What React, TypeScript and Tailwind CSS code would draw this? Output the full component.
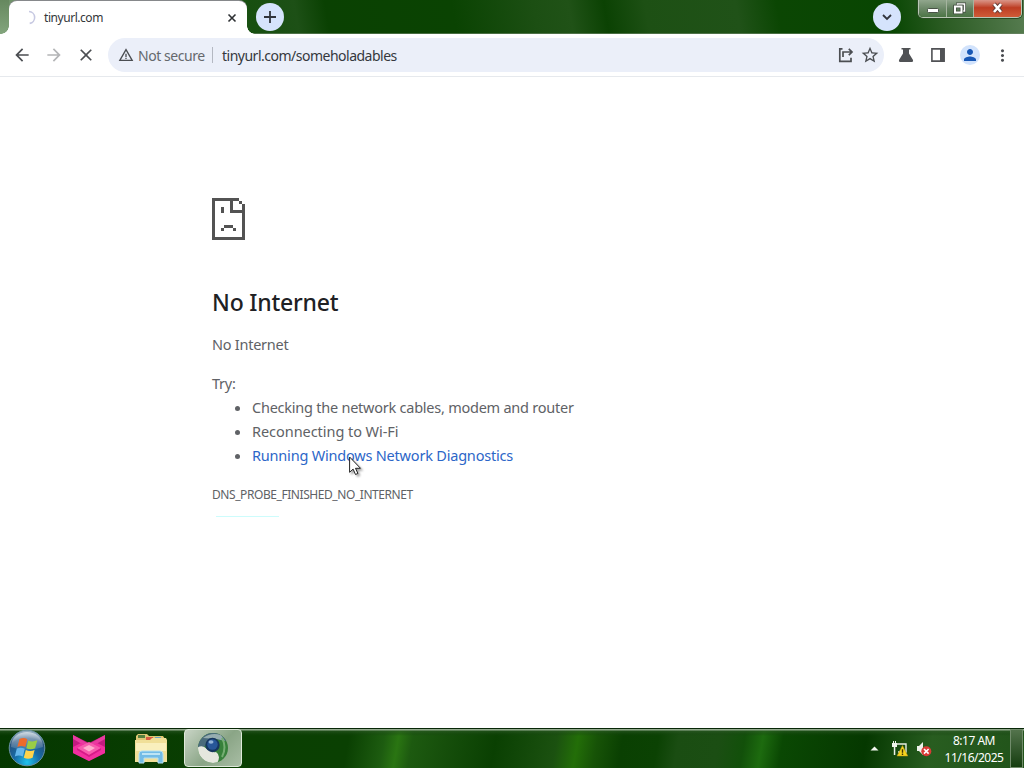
import type { ReactNode } from 'react';
import { MdArrowBack, MdArrowForward, MdClose, MdStarBorder, MdPerson, MdMoreVert, MdWarningAmber } from 'react-icons/md';

function RoundButton({ children }: { children: ReactNode }) {
  return (
    <button className="flex size-7 items-center justify-center rounded-full bg-[#d5e3fc] text-[#30343c]">
      {children}
    </button>
  );
}

/* Window buttons: minimize, restore, close */
function WindowControls() {
  return (
    <div className="flex h-[18px] w-[104px] overflow-hidden rounded-b-[5px] border border-t-0 border-[#b9c7b5] shadow-[0_0_0_1px_#294d23]">
      <button className="flex w-7 items-end justify-center border-r border-[#a5b49f] bg-gradient-to-b from-[#91a68d] via-[#6d8969] via-50% to-[#4c7545] pb-[4px]">
        <svg width="12" height="5" viewBox="0 0 12 5"><rect x=".5" y=".5" width="11" height="4" rx="1" fill="#fff" stroke="#485346" /></svg>
      </button>
      <button className="flex w-[27px] items-center justify-center border-r border-[#a5b49f] bg-gradient-to-b from-[#91a68d] via-[#627f5e] via-50% to-[#4c7545] pb-px pr-0.5">
        <svg width="13" height="13" viewBox="0 0 13 13" fill="none">
          <path d="M4.5 4V2h7v7h-2" stroke="#404b3f" strokeWidth="3" />
          <path d="M4.5 4V2h7v7h-2" stroke="#fff" strokeWidth="1.5" />
          <rect x="2" y="4.5" width="6.5" height="6" stroke="#404b3f" strokeWidth="3.5" />
          <rect x="2" y="4.5" width="6.5" height="6" stroke="#fff" strokeWidth="2" />
        </svg>
      </button>
      <button className="flex flex-1 items-center justify-center bg-gradient-to-b from-[#d99588] via-[#bd3d23] via-45% to-[#cf5b37] pb-0.5">
        <svg width="13" height="12" viewBox="0 0 13 12" fill="none">
          <path d="M3 2l7 8M10 2l-7 8" stroke="#643b36" strokeWidth="4.4" />
          <path d="M3 2l7 8M10 2l-7 8" stroke="#fff" strokeWidth="2.6" />
        </svg>
      </button>
    </div>
  );
}

function TabStrip() {
  return (
    <div className="flex h-[34px] items-start bg-[linear-gradient(0deg,rgba(110,135,105,0.6)_0,rgba(110,135,105,0.6)_1px,transparent_1px),linear-gradient(80deg,#75966f_0px,#4f7a48_140px,#174f10_250px,#1d5016_295px,#0a4102_325px,#0a4302_450px,#1c4f13_530px,#205217_565px,#0b4203_600px,#1d5014_640px,#205218_730px,#0b4603_770px,#084602_880px,#2a5b22_930px,#5c8056_1024px)]">
      <div className="flex h-[34px] w-[9px] items-end justify-end bg-gradient-to-b from-[#66885f] to-[#83a57d]">
        <div className="size-2 bg-[radial-gradient(circle_at_0_0,transparent_7.5px,#fff_8px)]" />
      </div>
      <div className="mt-px flex h-[33px] w-[238px] items-center rounded-t-lg bg-white pl-[14px] pr-[9px] shadow-[0_-1px_0_#86888b]">
        <svg width="15" height="15" viewBox="0 0 15 15" fill="none">
          <path d="M6 1.5A6 6 0 0 1 6.7 13.4" stroke="#c7c9e2" strokeWidth="1.6" />
        </svg>
        <span className="ml-1.5 flex-1 text-[12px] tracking-[-0.45px] text-[#34373a]">tinyurl.com</span>
        <svg width="12" height="12" viewBox="0 0 12 12"><path d="M2.5 2.5l7 7M9.5 2.5l-7 7" stroke="#2d3033" strokeWidth="1.6" /></svg>
      </div>
      <div className="flex h-[34px] w-2 items-end">
        <div className="size-2 bg-[radial-gradient(circle_at_100%_0,transparent_7.5px,#fff_8px)]" />
      </div>
      <div className="ml-px mt-[3px]">
        <RoundButton>
          <svg width="14" height="14" viewBox="0 0 14 14"><path d="M7 1v12M1 7h12" stroke="currentColor" strokeWidth="1.8" /></svg>
        </RoundButton>
      </div>
      <div className="ml-auto mt-[3px]">
        <RoundButton>
          <svg width="12" height="12" viewBox="0 0 12 12" fill="none"><path d="M2 4l4 4 4-4" stroke="currentColor" strokeWidth="1.8" /></svg>
        </RoundButton>
      </div>
      <div className="ml-[17px] mr-[2px]"><WindowControls /></div>
    </div>
  );
}

function Toolbar() {
  return (
    <div className="flex h-[43px] items-center border-b border-[#e6e9ed] bg-white pl-3 text-[#4b4e52]">
      <MdArrowBack size={20} />
      <MdArrowForward size={20} className="ml-3 text-[#b4b5b7]" />
      <MdClose size={20} className="ml-3" />
      <div className="ml-3 flex h-[34px] w-[776px] items-center rounded-full bg-[#ebeff9] pl-2.5 pr-1 text-[14px]">
        <MdWarningAmber size={16} />
        <span className="ml-1 w-[70px] whitespace-nowrap tracking-[-0.45px] text-[#65686d]">Not secure</span>
        <span className="ml-1 h-4 w-px bg-[#b4b8c2]" />
        <span className="ml-[9px] flex-1 tracking-[-0.5px] text-[#35383d]">tinyurl.com/someholadables</span>
        <svg width="16" height="16" viewBox="0 0 16 16" fill="none" stroke="currentColor" strokeWidth="1.7">
          <path d="M4.5 1.8H1.8v12.5H13v-3.5M5 10V5h9M10.8 1.8L14 5l-3.2 3.2" />
        </svg>
        <MdStarBorder size={20} className="ml-[6px]" />
      </div>
      <svg className="ml-[14px]" width="16" height="16" viewBox="0 0 16 16" fill="#505255">
        <path d="M3.5 1h9v1.6H11V6.5l4 6.5q.7 2-1.2 2H2.2q-1.9 0-1.2-2l4-6.5V2.6H3.5z" />
      </svg>
      <svg className="ml-4" width="16" height="16" viewBox="0 0 16 16">
        <path d="M1.9 1.9h12.2v12.2H1.9z" fill="none" stroke="#505255" strokeWidth="1.6" />
        <path d="M10 1.5h4.5v13H10z" fill="#505255" />
      </svg>
      <span className="ml-[14px] flex size-5 items-center justify-center rounded-full bg-[#d2e3fc] text-[#1757b5]">
        <MdPerson size={18} />
      </span>
      <MdMoreVert size={19} className="ml-[13px]" />
    </div>
  );
}

/* Pixel-art sad page, 3px per cell */
function SadPage() {
  return (
    <svg width="33" height="42" viewBox="0 0 11 14" fill="#535353" shapeRendering="crispEdges">
      <path d="M0 0h9v1H7v3h3V3h1v11H0zM1 1v12h9V5H6V1z" fillRule="evenodd" />
      <path d="M9 1h1v1H9zM10 2h1v1h-1zM3 3h1v2H3zM4 9h3v1H4zM3 10h1v1H3zM7 10h1v1H7z" />
    </svg>
  );
}

function Cursor() {
  return (
    <svg className="absolute left-[97px] top-[11px] drop-shadow-[2px_2px_1px_rgba(0,0,0,0.35)]" width="13" height="20" viewBox="0 0 13 20">
      <path d="M.6 1v15.3l3.5-3.2 2.4 5.4 2.4-1.1-2.4-5.1h5z" fill="#fff" stroke="#222" />
    </svg>
  );
}

function ErrorPage() {
  return (
    <main className="flex-1 bg-white pl-[212px] pt-[121px] text-[14.5px] leading-6 text-[#606266]">
      <SadPage />
      <h1 className="mt-[46px] text-[23px] font-medium leading-[32px] tracking-[-0.2px] text-[#202124]">No Internet</h1>
      <p className="mt-[14px] tracking-[-0.25px]">No Internet</p>
      <p className="mt-[15px] tracking-[-0.25px]">Try:</p>
      <ul className="list-disc pl-10">
        <li className="tracking-[-0.24px]">Checking the network cables, modem and router</li>
        <li className="tracking-[-0.05px]">Reconnecting to Wi-Fi</li>
        <li className="tracking-[-0.2px]">
          <span className="relative whitespace-nowrap text-[#2c66c8]">
            Running Windows Network Diagnostics
            <Cursor />
          </span>
        </li>
      </ul>
      <div className="mt-[18px] text-[12px] leading-[20px] tracking-[-0.43px]">DNS_PROBE_FINISHED_NO_INTERNET</div>
      <div className="ml-1 mt-[11px] h-px w-[63px] bg-[#cdfcfc]" />
    </main>
  );
}

function StartOrb() {
  return (
    <svg width="38" height="38" viewBox="0 0 38 38">
      <defs>
        <radialGradient id="orb" cx=".5" cy=".9" r=".9">
          <stop offset="0" stopColor="#20c3ed" /><stop offset=".4" stopColor="#176ba7" />
          <stop offset=".75" stopColor="#24517d" /><stop offset="1" stopColor="#a7bdca" />
        </radialGradient>
        <linearGradient id="gloss" x2="0" y2="1"><stop stopColor="#fff" stopOpacity=".6" /><stop offset="1" stopColor="#fff" stopOpacity=".1" /></linearGradient>
      </defs>
      <circle cx="19" cy="19" r="17.8" fill="url(#orb)" stroke="#6992a3" />
      <path d="M3 18C3-2 35-2 35 18Q19 24 3 18" fill="url(#gloss)" />
      <path d="M11.5 10q4.5-2 7.8.3l-2 7.8q-4-2-8 0z" fill="#ed6b2b" />
      <path d="M20.3 11.5q4 2 9-.2l-2.2 8q-4.5 2-8.8 0z" fill="#9acd45" />
      <path d="M8.8 19.6q4-2 8 .2l-2 7.7q-4-2-8 0z" fill="#64b6eb" />
      <path d="M17.8 21q4.3 2 8.8 0l-2 7.7q-4.5 2-8.8 0z" fill="#ffd34b" />
    </svg>
  );
}

function PinkGem() {
  return (
    <svg width="34" height="28" viewBox="0 0 34 28">
      <path d="M1 1l16 8L33 1v18l-16 8L1 19z" fill="#c31b80" />
      <path d="M1 1l16 9L33 1v4l-16 9L1 5z" fill="#e93ba0" />
      <path d="M1 13l8-4 8 4 8-4 8 4v6l-16 8L1 19z" fill="#f22f9f" />
      <path d="M17 8l12 6-12 7L5 14z" fill="#f75cae" />
      <path d="M17 11l6 3-6 3.500-6-3.500z" fill="#ffaccd" />
      <path d="M5 14l12 7 12-7v2l-12 7-12-7z" fill="#d61b88" />
    </svg>
  );
}

function Explorer() {
  return (
    <svg width="34" height="32" viewBox="0 0 34 32">
      <path d="M2 3l2-2h9l2 2h14l2 3v23H2z" fill="#dfc875" />
      <path d="M4 2h7v3H4z" fill="#57813f" /><path d="M12 4h7v3h-7z" fill="#d85d43" /><path d="M21 4h6v2h-6z" fill="#6aa3c1" />
      <path d="M1 7h15l2-2h14l1 2v22H1z" fill="#f0df98" />
      <path d="M2 10h30v8H2z" fill="#f9efbd" />
      <path d="M5 30v-9q0-3 3-3h18q3 0 3 3v9h-5v-5H10v5z" fill="#73bce6" stroke="#b6e0f2" />
      <path d="M8 21h18" stroke="#bde4f5" strokeWidth="2" />
    </svg>
  );
}

function BrowserIcon() {
  return (
    <svg width="32" height="32" viewBox="0 0 32 32">
      <defs><clipPath id="ball"><circle cx="16" cy="16" r="15" /></clipPath></defs>
      <g clipPath="url(#ball)">
        <path d="M0 0h32v32H0z" fill="#37803a" />
        <path d="M0 16V0h32v9L22 8q-7-3-10 1L7 15z" fill="#4a6b7c" />
        <path d="M6 6q8-6 18-3l4 6-8-2" fill="#b6c9c6" opacity=".7" />
        <path d="M0 16q5-4 10 1 4 4 9 3 6 4 0 13H5Q0 28 0 16" fill="#e6e7de" />
        <path d="M25 6q5 9 0 19" fill="none" stroke="#75ad72" strokeWidth="2" />
      </g>
      <circle cx="15.5" cy="13" r="7.2" fill="#17365f" />
      <circle cx="15.5" cy="12.5" r="5.2" fill="#285799" />
      <ellipse cx="14" cy="10" rx="2.5" ry="1.8" fill="#92b3d7" />
    </svg>
  );
}

function Taskbar() {
  return (
    <footer className="flex h-10 items-center border-t border-[#082707] bg-[linear-gradient(180deg,#93ab8e_0,#93ab8e_1px,rgba(44,88,38,0.6)_2px,rgba(24,70,18,0.3)_5px,transparent_7px),linear-gradient(100deg,#053800_0,#0a3f02_240px,#0a4002_345px,#1d5c10_380px,#2a7512_394px,#1d5a10_408px,#164f0b_440px,#0a4002_490px,#1b5110_550px,#236e08_571px,#175307_590px,#0a4002_615px,#0b4203_650px,#1a4d12_670px,#1b4e13_710px,#12500a_735px,#1d6b0f_753px,#0a4803_773px,#053800_855px,#285d20_920px,#205219_1024px)]">
      <div className="-mt-0.5 ml-2"><StartOrb /></div>
      <div className="-mt-0.5 ml-[26px]"><PinkGem /></div>
      <div className="ml-[28px]"><Explorer /></div>
      <div className="-mt-0.5 ml-[16px] flex h-[38px] w-[58px] items-center justify-center rounded-sm border border-[#dfe9da] bg-[linear-gradient(135deg,#c8d4c5,#8aa586_55%,#a8bda4)]">
        <BrowserIcon />
      </div>
      <svg className="ml-auto" width="9" height="5" viewBox="0 0 9 5"><path d="M.5 4.5l4-4 4 4z" fill="#f2f7ef" /></svg>
      <svg className="ml-[13px]" width="16" height="16" viewBox="0 0 16 16">
        <path d="M5 3h9v8H6M8 14h5" fill="none" stroke="#e8eee4" strokeWidth="1.4" />
        <path d="M0 2h5v4H3.3v8H1.8V6H0zM1 0h1v3H1zM3 0h1v3H3z" fill="#eef3eb" />
        <path d="M10.5 4.500l5.300 10.500H5z" fill="#f6d51e" stroke="#b99616" strokeWidth=".5" /><path d="M9.8 8.3h1.4v3.5H9.8zm0 4.3h1.4V14H9.8z" fill="#3d3504" />
      </svg>
      <svg className="ml-2" width="16" height="16" viewBox="0 0 16 16">
        <path d="M1 5h2l4-4v13l-4-4H1z" fill="#edf1ea" />
        <circle cx="10.3" cy="10.3" r="5" fill="#da3935" /><path d="M8 8l4.6 4.6M12.6 8L8 12.6" stroke="#fff" strokeWidth="1.6" />
      </svg>
      <div className="ml-3 w-[60px] whitespace-nowrap text-center text-[12px] leading-[17px] tracking-[-0.5px] text-white">
        <div>8:17 AM</div>
        <div>11/16/2025</div>
      </div>
      <div className="ml-[6px] mr-px h-[39px] w-[13px] border border-[#718c6b] bg-gradient-to-b from-[#53734c] to-[#153e0f]" />
    </footer>
  );
}

export default function App() {
  return (
    <div className="flex h-[768px] w-[1024px] flex-col overflow-hidden bg-white font-['Noto_Sans',sans-serif]">
      <TabStrip />
      <Toolbar />
      <ErrorPage />
      <Taskbar />
    </div>
  );
}
